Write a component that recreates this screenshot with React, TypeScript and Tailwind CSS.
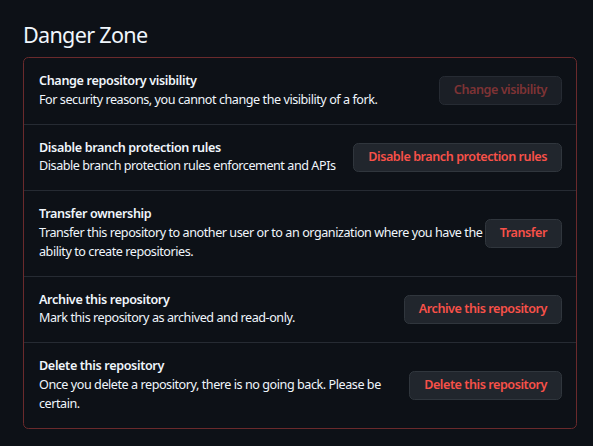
import React from "react";

type DangerItem = {
  title: string;
  lines: string[];
  action: string;
  disabled?: boolean;
};

const items: DangerItem[] = [
  {
    title: "Change repository visibility",
    lines: ["For security reasons, you cannot change the visibility of a fork."],
    action: "Change visibility",
    disabled: true,
  },
  {
    title: "Disable branch protection rules",
    lines: ["Disable branch protection rules enforcement and APIs"],
    action: "Disable branch protection rules",
  },
  {
    title: "Transfer ownership",
    lines: [
      "Transfer this repository to another user or to an organization where you have the",
      "ability to create repositories.",
    ],
    action: "Transfer",
  },
  {
    title: "Archive this repository",
    lines: ["Mark this repository as archived and read-only."],
    action: "Archive this repository",
  },
  {
    title: "Delete this repository",
    lines: ["Once you delete a repository, there is no going back. Please be", "certain."],
    action: "Delete this repository",
  },
];

function DangerRow({ item, last }: { item: DangerItem; last: boolean }): JSX.Element {
  return (
    <div
      className={`flex items-center gap-2 pl-[15px] pr-[14px] py-[14px] ${
        last ? "" : "border-b border-[#262b33]"
      }`}
    >
      <div className="flex-auto min-w-0">
        <div className="font-semibold text-[#f0f6fc]">{item.title}</div>
        <p className="text-[#f0f6fc] tracking-[-0.45px]">
          {item.lines.map((line) => (
            <span key={line} className="block whitespace-nowrap">
              {line}
            </span>
          ))}
        </p>
      </div>
      <button
        disabled={item.disabled}
        className={`shrink-0 h-[28.8px] px-[14px] rounded-[5.4px] border font-semibold tracking-[-0.45px] whitespace-nowrap ${
          item.disabled
            ? "bg-[#1b1f26] border-[#262b33] text-[#7e3335]"
            : "bg-[#21262d] border-[#30363d] text-[#f85149]"
        }`}
      >
        {item.action}
      </button>
    </div>
  );
}

export default function App(): JSX.Element {
  return (
    <div
      className="min-h-screen bg-[#0d1117] pl-[23px] pr-[16px] pt-[21px] text-[12.6px] leading-[18.8px] tracking-[-0.35px]"
      style={{ fontFamily: '"Noto Sans", "Open Sans", sans-serif' }}
    >
      <h2 className="text-[21.6px] leading-[27px] font-normal text-[#f0f6fc] mb-[9px] tracking-[-0.7px]">
        Danger Zone
      </h2>
      <div className="rounded-[5.4px] border border-[#6a2a2c]">
        {items.map((item, i) => (
          <DangerRow key={item.title} item={item} last={i === items.length - 1} />
        ))}
      </div>
    </div>
  );
}
